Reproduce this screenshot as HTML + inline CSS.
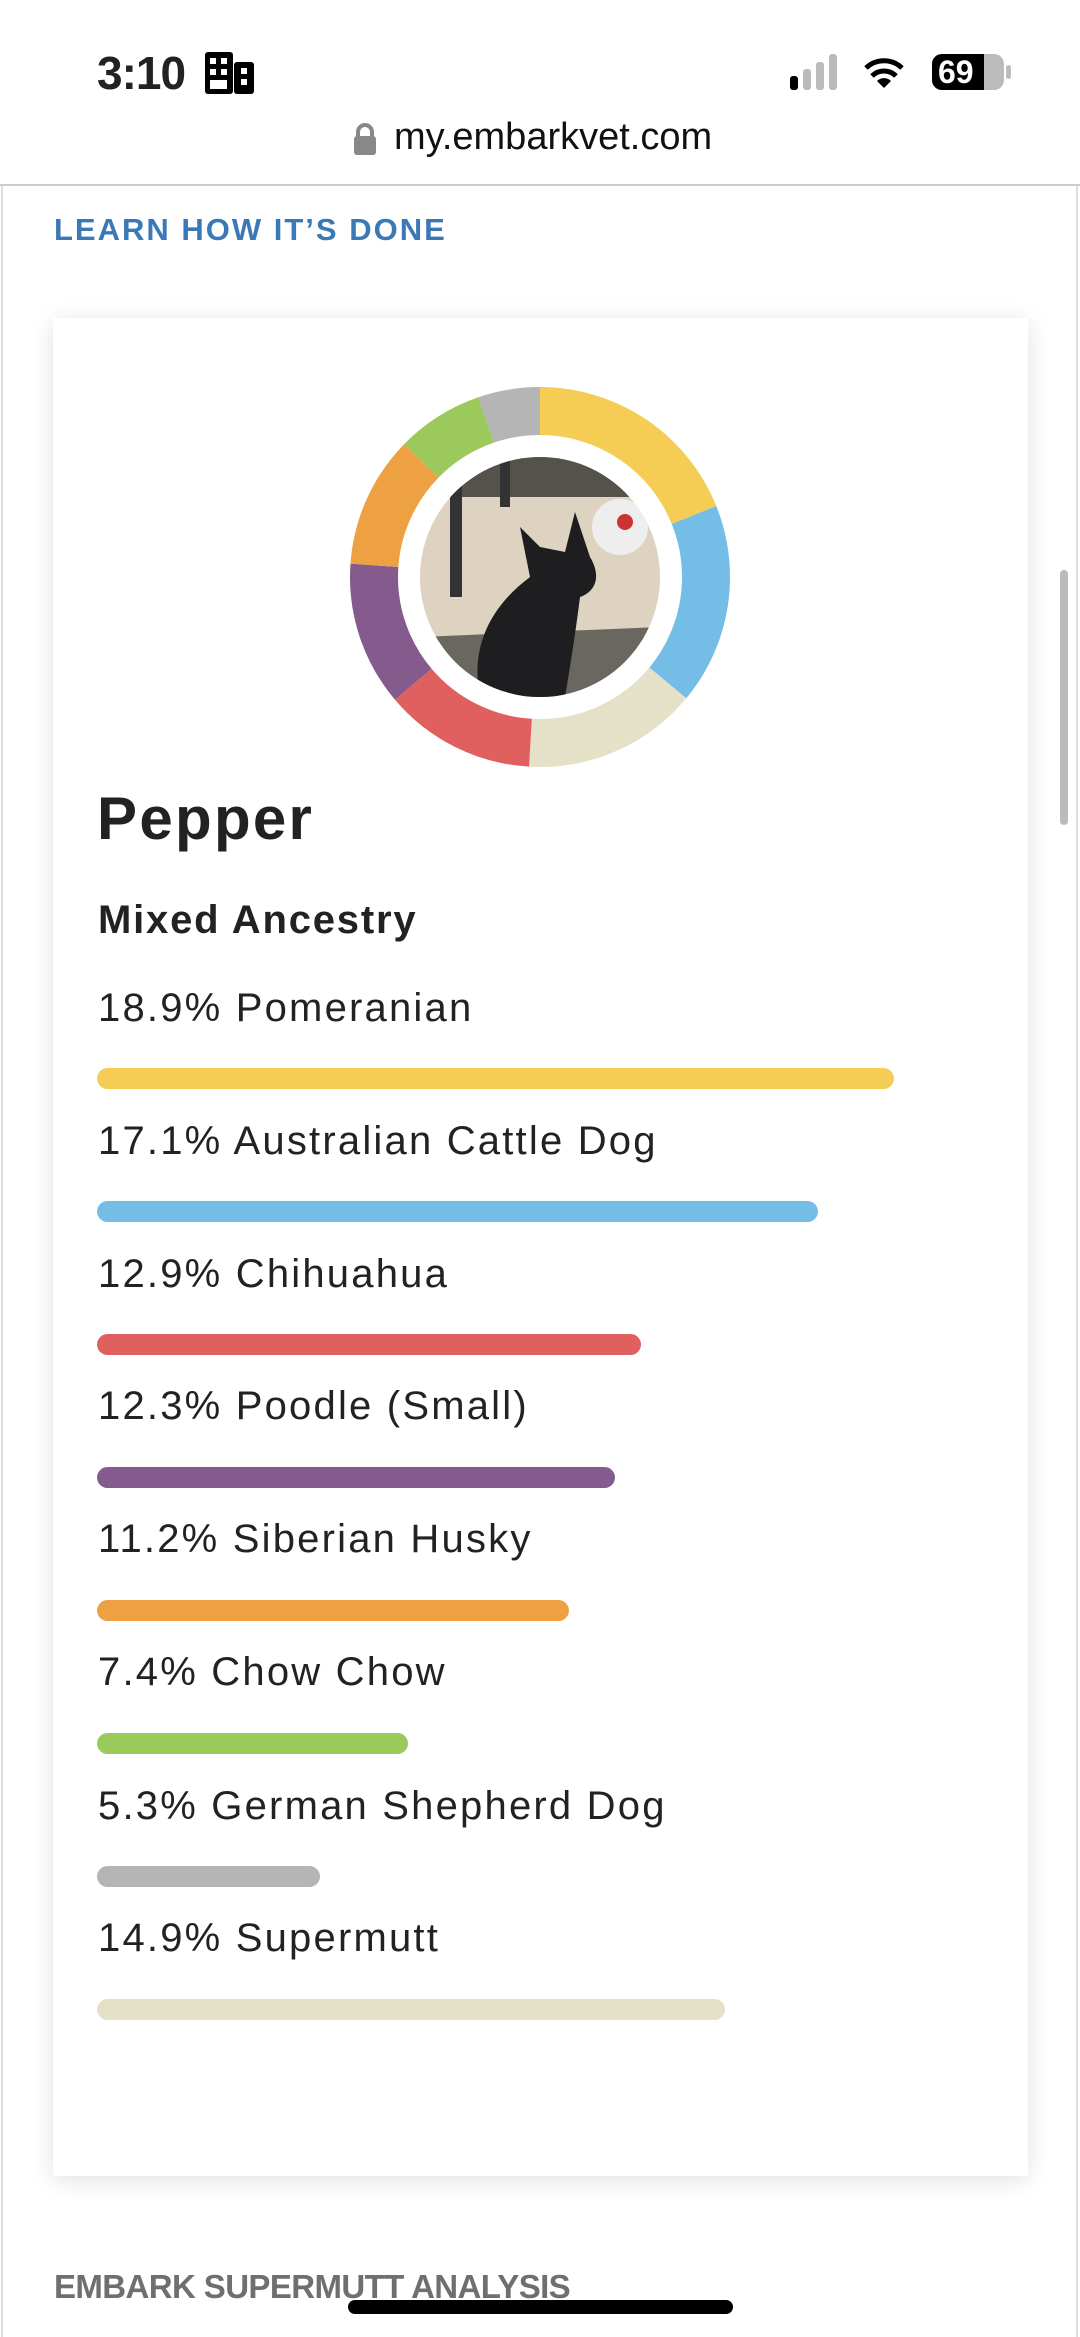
<!DOCTYPE html>
<html><head><meta charset="utf-8"><style>
*{margin:0;padding:0;box-sizing:border-box}
body{width:1080px;height:2337px;background:#fff;position:relative;overflow:hidden;font-family:"Liberation Sans",sans-serif;color:#222}
.abs{position:absolute}
.row{position:absolute;left:98px;font-size:40px;color:#222;line-height:48px;letter-spacing:2.2px}
.bar{position:absolute;left:97px;height:21px;border-radius:11px}
</style></head><body>
<div class="abs" style="left:97px;top:46px;font-size:46px;font-weight:bold;letter-spacing:-1px">3:10</div>
<svg class="abs" style="left:205px;top:52px" width="50" height="42" viewBox="0 0 50 42"><rect x="0" y="0" width="28" height="42" rx="3" fill="#000"/><rect x="29" y="10" width="20" height="32" rx="3" fill="#000"/><g fill="#fff"><rect x="5" y="6" width="6" height="6"/><rect x="16" y="6" width="6" height="6"/><rect x="5" y="17" width="6" height="6"/><rect x="16" y="17" width="6" height="6"/><rect x="5" y="28" width="17" height="9"/><rect x="36" y="16" width="6" height="6"/><rect x="36" y="27" width="6" height="6"/></g></svg>
<svg class="abs" style="left:788px;top:54px" width="60" height="36"><rect x="2" y="22" width="8" height="14" rx="3" fill="#000"/><rect x="15" y="15" width="8" height="21" rx="3" fill="#bbb"/><rect x="28" y="8" width="8" height="28" rx="3" fill="#bbb"/><rect x="41" y="0" width="8" height="36" rx="3" fill="#bbb"/></svg>
<svg class="abs" style="left:862px;top:54px" width="44" height="36" viewBox="0 0 44 36"><path d="M22 34 L15 27 A10 10 0 0 1 29 27Z" fill="#000"/><path d="M10 22 A17 17 0 0 1 34 22" stroke="#000" stroke-width="5" fill="none"/><path d="M4 14 A26 26 0 0 1 40 14" stroke="#000" stroke-width="5" fill="none"/></svg>
<div class="abs" style="left:932px;top:54px;width:72px;height:36px;border-radius:10px;background:#bbb;overflow:hidden"><div style="width:52px;height:36px;background:#000"></div><div class="abs" style="left:0;top:0;width:72px;text-align:left;padding-left:6px;font-size:32px;font-weight:bold;color:#fff;line-height:36px">69</div></div>
<div class="abs" style="left:1006px;top:65px;width:5px;height:14px;border-radius:3px;background:#bbb"></div>
<svg class="abs" style="left:353px;top:123px" width="24" height="33"><path d="M5 14 V9 A7 7 0 0 1 19 9 V14" stroke="#888" stroke-width="4" fill="none"/><rect x="1" y="13" width="22" height="19" rx="3" fill="#888"/></svg>
<div class="abs" style="left:394px;top:116px;font-size:38px;color:#111">my.embarkvet.com</div>
<div class="abs" style="left:0;top:184px;width:1080px;height:2px;background:#ccc"></div>
<div class="abs" style="left:1px;top:186px;width:2px;height:2151px;background:#ddd"></div>
<div class="abs" style="left:1076px;top:186px;width:2px;height:2151px;background:#ddd"></div>
<div class="abs" style="left:54px;top:212px;font-size:31px;font-weight:bold;color:#3b78b6;letter-spacing:2px">LEARN HOW IT’S DONE</div>
<div class="abs" style="left:53px;top:318px;width:975px;height:1858px;background:#fff;box-shadow:0 4px 22px rgba(0,0,0,0.12)"></div>
<svg class="abs" style="left:340px;top:377px" width="400" height="400" viewBox="0 0 400 400">
<g transform="rotate(-90 200 200)" fill="none" stroke-width="48">
<circle cx="200" cy="200" r="166" stroke="#f5cd55" stroke-dasharray="197.1 2000" stroke-dashoffset="0"/>
<circle cx="200" cy="200" r="166" stroke="#74bde6" stroke-dasharray="178.4 2000" stroke-dashoffset="-197.1"/>
<circle cx="200" cy="200" r="166" stroke="#e5e0c8" stroke-dasharray="155.4 2000" stroke-dashoffset="-375.5"/>
<circle cx="200" cy="200" r="166" stroke="#e0605f" stroke-dasharray="134.5 2000" stroke-dashoffset="-530.9"/>
<circle cx="200" cy="200" r="166" stroke="#845b8c" stroke-dasharray="128.3 2000" stroke-dashoffset="-665.4"/>
<circle cx="200" cy="200" r="166" stroke="#eea142" stroke-dasharray="116.8 2000" stroke-dashoffset="-793.7"/>
<circle cx="200" cy="200" r="166" stroke="#9bc95b" stroke-dasharray="77.2 2000" stroke-dashoffset="-910.5"/>
<circle cx="200" cy="200" r="166" stroke="#b5b5b5" stroke-dasharray="55.3 2000" stroke-dashoffset="-987.7"/>
</g>
<defs><clipPath id="c"><circle cx="200" cy="200" r="120"/></clipPath></defs>
<g clip-path="url(#c)">
<rect x="80" y="80" width="240" height="240" fill="#ddd3c0"/>
<rect x="80" y="80" width="240" height="40" fill="#55524c"/>
<rect x="110" y="100" width="12" height="120" fill="#333"/>
<rect x="160" y="80" width="10" height="50" fill="#333"/>
<circle cx="280" cy="150" r="28" fill="#eee"/><circle cx="285" cy="145" r="8" fill="#c33"/>
<path d="M80 260 L320 250 L320 320 L80 320Z" fill="#6a6660"/>
<path d="M140 320 C130 270 150 230 190 200 L180 150 L200 170 L225 175 L235 135 L250 180 C262 200 255 215 240 220 C235 260 230 290 225 320Z" fill="#1e1e20"/>
</g>
</svg>
<div class="abs" style="left:97px;top:784px;font-size:60px;font-weight:bold;color:#222;letter-spacing:2.3px">Pepper</div>
<div class="abs" style="left:98px;top:898px;font-size:40px;font-weight:bold;color:#222;letter-spacing:1.8px">Mixed Ancestry</div>
<div class="row" style="top:984px">18.9% Pomeranian</div>
<div class="bar" style="top:1068px;width:797px;background:#f5cd55"></div>
<div class="row" style="top:1117px">17.1% Australian Cattle Dog</div>
<div class="bar" style="top:1201px;width:721px;background:#74bde6"></div>
<div class="row" style="top:1250px">12.9% Chihuahua</div>
<div class="bar" style="top:1334px;width:544px;background:#e0605f"></div>
<div class="row" style="top:1382px">12.3% Poodle (Small)</div>
<div class="bar" style="top:1467px;width:518px;background:#845b8c"></div>
<div class="row" style="top:1515px">11.2% Siberian Husky</div>
<div class="bar" style="top:1600px;width:472px;background:#eea142"></div>
<div class="row" style="top:1648px">7.4% Chow Chow</div>
<div class="bar" style="top:1733px;width:311px;background:#9bc95b"></div>
<div class="row" style="top:1782px">5.3% German Shepherd Dog</div>
<div class="bar" style="top:1866px;width:223px;background:#b5b5b5"></div>
<div class="row" style="top:1914px">14.9% Supermutt</div>
<div class="bar" style="top:1999px;width:628px;background:#e5e0c8"></div>
<div class="abs" style="left:1060px;top:570px;width:8px;height:255px;border-radius:4px;background:#bbb"></div>
<div class="abs" style="left:54px;top:2268px;font-size:33px;font-weight:bold;color:#6f6f6f;letter-spacing:-0.6px">EMBARK SUPERMUTT ANALYSIS</div>
<div class="abs" style="left:348px;top:2300px;width:385px;height:14px;border-radius:7px;background:#000"></div>
</body></html>
